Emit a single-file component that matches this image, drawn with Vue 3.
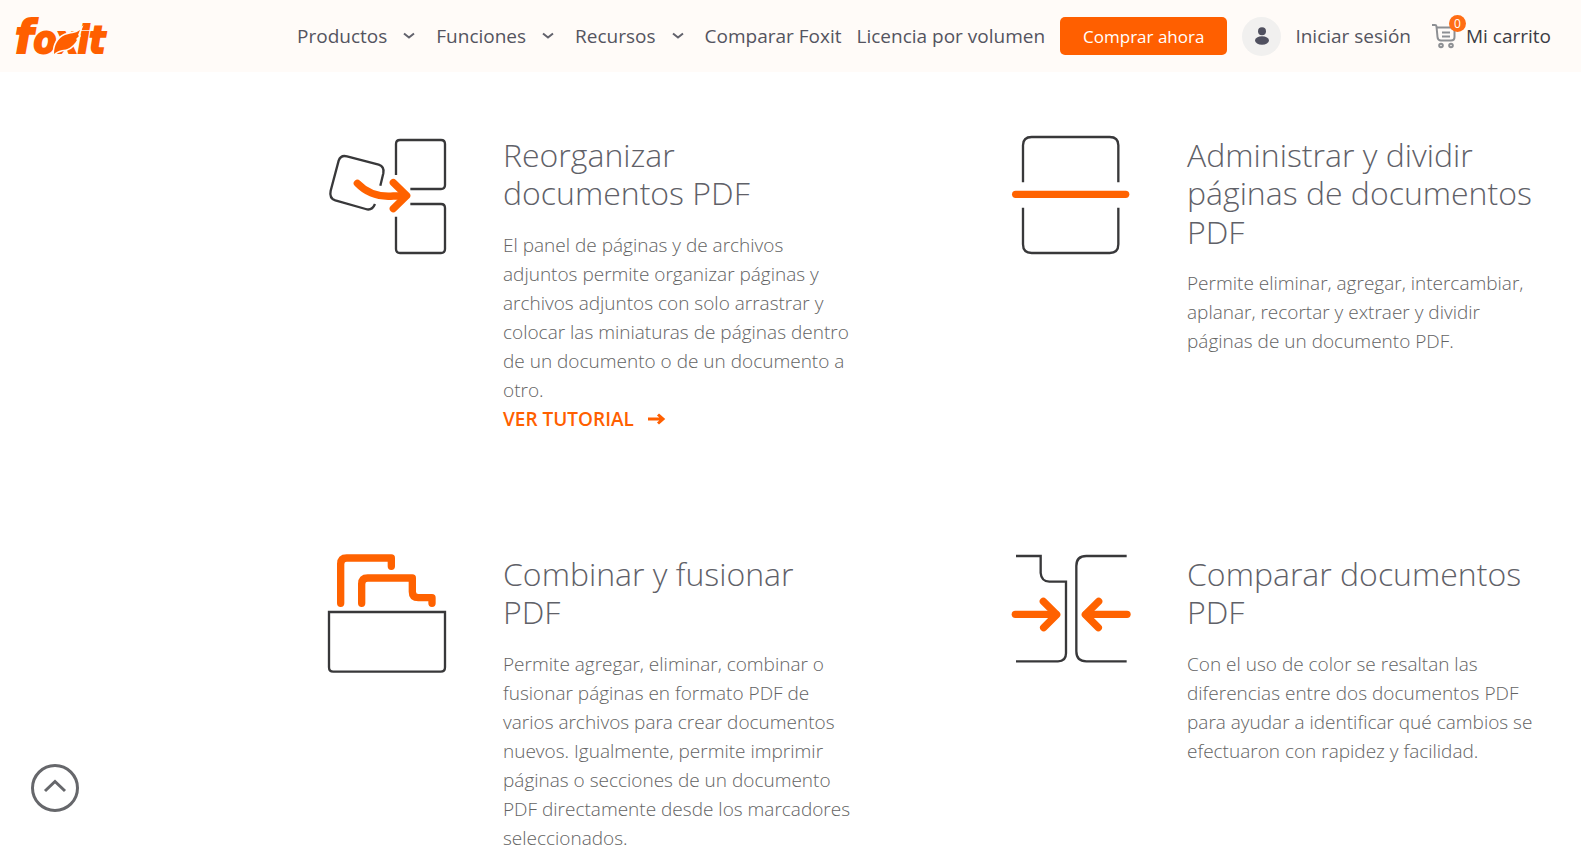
<template>
  <div class="page">
    <header class="header">
      <a class="logo" href="#" aria-label="Foxit">
        <svg viewBox="0 -14 98 66" width="98" height="66">
          <text class="logo-text" x="1" y="36"><tspan class="logo-f">f</tspan>oxit</text>
          <path class="logo-leaf" d="M40 37C40 28 44 21 51 18C56 16 61 17 66 13L64 18L65 19L62 22L63 23C59 30 53 33 48 33C44 34 42 35 40 37Z" />
        </svg>
      </a>
      <nav class="nav">
        <button v-for="item in menus" :key="item" class="nav-menu" type="button">
          {{ item }}
          <svg class="chevron" viewBox="0 0 12 8" width="12" height="8">
            <path d="M1 1.5L6 5.5L11 1.5" />
          </svg>
        </button>
        <a v-for="item in links" :key="item" class="nav-link" href="#">{{ item }}</a>
        <button class="buy-btn" type="button">Comprar ahora</button>
        <a class="nav-link login" href="#">
          <span class="avatar">
            <svg viewBox="0 0 14 18" width="14" height="18">
              <circle cx="7" cy="4.2" r="4" />
              <ellipse cx="7" cy="13.5" rx="7" ry="4.2" />
            </svg>
          </span>
          Iniciar sesión
        </a>
        <a class="nav-link cart" href="#">
          <span class="cart-icon">
            <svg viewBox="0 0 24 24" width="24" height="24">
              <path d="M0 1H3Q4.300 1 4.500 2.500L5.500 13Q5.800 16.500 9 16.500H19Q22.500 16.500 22.500 13V3.500H5" />
              <path d="M10 8.500H18M10 12.500H18" />
              <circle cx="9" cy="21.500" r="1.800" />
              <circle cx="19" cy="21.500" r="1.800" />
            </svg>
            <span class="badge">{{ cartCount }}</span>
          </span>
          Mi carrito
        </a>
      </nav>
    </header>

    <main class="features">
      <section v-for="item in features" :key="item.title" class="feature">
        <svg class="feature-icon" :viewBox="item.viewBox">
          <path v-for="d in item.lines" :key="d" class="line" :d="d" />
          <path v-for="d in item.accents" :key="d" class="accent" :d="d" />
        </svg>
        <div class="feature-body">
          <h2>{{ item.title }}</h2>
          <p>{{ item.text }}</p>
          <a v-if="item.tutorial" class="tutorial" href="#">
            VER TUTORIAL
            <svg viewBox="0 0 18 12" width="18" height="12">
              <path d="M1 6H16M11 1.500L16 6L11 10.500" />
            </svg>
          </a>
        </div>
      </section>
    </main>

    <button class="to-top" type="button" aria-label="Volver arriba" @click="scrollTop">
      <svg viewBox="0 0 48 48" width="48" height="48">
        <circle cx="24" cy="24" r="22.500" />
        <path d="M14 27L24 17.500L34 27" />
      </svg>
    </button>
  </div>
</template>

<script setup>
import { ref } from 'vue'

const cartCount = ref(0)
const menus = ['Productos', 'Funciones', 'Recursos']
const links = ['Comparar Foxit', 'Licencia por volumen']

const features = [
  {
    title: 'Reorganizar documentos PDF',
    text: 'El panel de páginas y de archivos adjuntos permite organizar páginas y archivos adjuntos con solo arrastrar y colocar las miniaturas de páginas dentro de un documento o de un documento a otro.',
    tutorial: true,
    viewBox: '54 48 360 360',
    lines: [
      'M258 165V72Q258 60 270 60H393Q405 60 405 72V195Q405 207 393 207H301',
      'M301 252H393Q405 252 405 264V387Q405 399 393 399H270Q258 399 258 387V290',
      'M211 197L220 160Q224 140 206 134L111 109Q92 104 86 122L62 212Q57 235 76 241L167 267Q186 273 195 252'
    ],
    accents: ['M142 190Q184 234 250 228H284', 'M250 188L290 227L250 266']
  },
  {
    title: 'Administrar y dividir páginas de documentos PDF',
    text: 'Permite eliminar, agregar, intercambiar, aplanar, recortar y extraer y dividir páginas de un documento PDF.',
    viewBox: '36 48 360 360',
    lines: [
      'M69 187V76Q69 51 95 51H329Q355 51 355 76V187',
      'M69 263V373Q69 399 95 399H329Q355 399 355 373V263'
    ],
    accents: ['M47 223H377']
  },
  {
    title: 'Combinar y fusionar PDF',
    text: 'Permite agregar, eliminar, combinar o fusionar páginas en formato PDF de varios archivos para crear documentos nuevos. Igualmente, permite imprimir páginas o secciones de un documento PDF directamente desde los marcadores seleccionados.',
    viewBox: '54 45 360 360',
    lines: ['M57 216H405V382Q405 395 392 395H70Q57 395 57 382Z'],
    accents: [
      'M92 190V72Q92 54 110 54H244V79',
      'M155 190V132Q155 114 173 114H307V155Q307 173 325 173H366V190'
    ]
  },
  {
    title: 'Comparar documentos PDF',
    text: 'Con el uso de color se resaltan las diferencias entre dos documentos PDF para ayudar a identificar qué cambios se efectuaron con rapidez y facilidad.',
    viewBox: '36 45 360 360',
    lines: [
      'M48 48H122V99Q124 124 148 125H198V340Q198 364 174 364H48',
      'M380 48H259Q229 48 229 78V334Q229 364 259 364H380'
    ],
    accents: ['M46 223H168', 'M130 184L170 224L131 263', 'M381 223H258', 'M296 184L256 224L295 263']
  }
]

function scrollTop() {
  window.scrollTo({ top: 0, behavior: 'smooth' })
}
</script>

<style>
body {
  margin: 0;
  background: #fff;
}
</style>

<style scoped>
.page {
  font-family: "Open Sans", "Noto Sans", sans-serif;
  color: #636363;
}
.page * {
  box-sizing: border-box;
}
button {
  font-family: inherit;
  border: none;
  background: none;
  padding: 0;
  cursor: pointer;
}
a {
  color: inherit;
  text-decoration: none;
}
svg {
  display: block;
  flex: none;
  overflow: visible;
}
.header {
  display: flex;
  align-items: center;
  justify-content: space-between;
  height: 72px;
  padding: 0 30px 0 14px;
  background: #fffbf8;
}
.logo-text {
  font-family: "DejaVu Sans Condensed", "DejaVu Sans", sans-serif;
  font-size: 37px;
  font-weight: 700;
  font-style: italic;
  fill: #ff5f00;
  stroke: #ff5f00;
  stroke-width: 2;
}
.logo-f {
  font-size: 47px;
}
.logo-leaf {
  fill: #ff5f00;
  stroke: #fffbf8;
  stroke-width: 3;
  paint-order: stroke;
}
.nav {
  display: flex;
  align-items: center;
  gap: 15px;
  font-size: 19px;
  color: #54545f;
  white-space: nowrap;
}
.nav-menu {
  display: flex;
  align-items: center;
  gap: 16px;
  margin-right: 6px;
  font-size: 19px;
  color: inherit;
}
.chevron {
  fill: none;
  stroke: #62626c;
  stroke-width: 2;
}
.buy-btn {
  height: 38px;
  padding: 0 23px;
  border-radius: 5px;
  background: #ff5f00;
  color: #fff;
  font-size: 17px;
}
.login {
  display: flex;
  align-items: center;
  gap: 14px;
}
.avatar {
  display: flex;
  align-items: center;
  justify-content: center;
  width: 39px;
  height: 39px;
  border-radius: 50%;
  background: #f1f0ef;
}
.avatar svg {
  fill: #50505f;
}
.cart {
  display: flex;
  align-items: center;
  gap: 10px;
  margin-left: 6px;
  color: #3c3c44;
}
.cart-icon {
  position: relative;
}
.cart-icon svg {
  fill: none;
  stroke: #8d8f93;
  stroke-width: 2;
}
.badge {
  position: absolute;
  top: -9px;
  right: -10px;
  width: 17px;
  height: 17px;
  border-radius: 50%;
  background: #ff6d15;
  color: #fff;
  font-size: 12px;
  line-height: 17px;
  text-align: center;
}
.features {
  display: grid;
  grid-template-columns: 1fr 1fr;
  column-gap: 157px;
  row-gap: 121px;
  padding: 64px 42px 0 328px;
}
.feature {
  display: flex;
  align-items: flex-start;
  gap: 55px;
}
.feature-icon {
  width: 120px;
  height: 120px;
}
.line {
  fill: none;
  stroke: #38383a;
  stroke-width: 7;
}
.accent {
  fill: none;
  stroke: #ff6200;
  stroke-width: 22;
  stroke-linecap: round;
  stroke-linejoin: round;
}
.feature-body {
  flex: 1;
  min-width: 0;
}
h2 {
  margin: 0 0 18px;
  font-size: 32px;
  font-weight: 300;
  line-height: 1.2;
  color: #5f6168;
}
p {
  margin: 0;
  font-size: 19px;
  font-weight: 300;
  line-height: 29px;
}
.tutorial {
  display: flex;
  align-items: center;
  gap: 13px;
  font-size: 19px;
  font-weight: 600;
  line-height: 29px;
  color: #ff5f00;
}
.tutorial svg {
  fill: none;
  stroke: #ff5f00;
  stroke-width: 3;
}
.to-top {
  position: fixed;
  left: 31px;
  bottom: 55px;
}
.to-top svg {
  fill: #fff;
  stroke: #66676b;
  stroke-width: 3;
}
</style>
